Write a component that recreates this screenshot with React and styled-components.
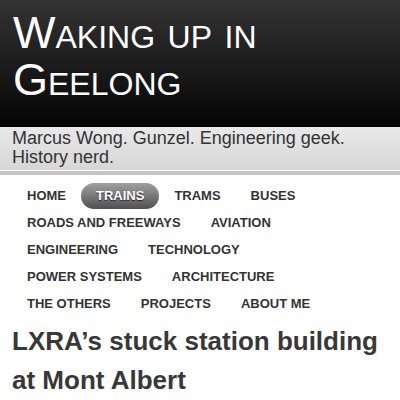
import React from "react";
import styled, { createGlobalStyle } from "styled-components";

const GlobalStyle = createGlobalStyle`
  html, body {
    margin: 0;
    padding: 0;
    background: #fff;
  }
  body {
    font-family: "Liberation Sans", Arial, sans-serif;
    overflow: hidden;
  }
`;

const menu = [
  "Home",
  "Trains",
  "Trams",
  "Buses",
  "Roads and Freeways",
  "Aviation",
  "Engineering",
  "Technology",
  "Power Systems",
  "Architecture",
  "The Others",
  "Projects",
  "About Me",
];

const Masthead = styled.header`
  background: linear-gradient(to bottom, #333 0%, #050505 100%);
  padding: 9px 13px 10px;
  height: 127px;
  box-sizing: border-box;
`;

const SiteTitle = styled.h1`
  margin: 0;
  font-family: "Liberation Sans", Arial, sans-serif;
  font-weight: normal;
  font-variant: small-caps;
  font-size: 45px;
  line-height: 47px;
  color: #fff;
`;

const Tagline = styled.div`
  background: linear-gradient(to bottom, #e9e9e9 0%, #d6d6d6 100%);
  color: #333;
  font-size: 18px;
  line-height: 19px;
  padding: 2px 12px 3px;
  border-bottom: 1px solid #fff;
  box-shadow: 0 4px 0 #c4c4c4;
  margin-bottom: 4px;
`;

const Nav = styled.nav`
  padding: 8px 12px 0;
`;

const MenuList = styled.ul`
  list-style: none;
  margin: 0;
  padding: 0;
  display: flex;
  flex-wrap: wrap;
  row-gap: 1px;
`;

const MenuItem = styled.li`
  display: block;
  padding: 0 15px;
  height: 26px;
  line-height: 26px;
  font-size: 13px;
  font-weight: bold;
  text-transform: uppercase;
  color: ${({ $active }) => ($active ? "#fff" : "#333")};
  border-radius: 13px;
  background: ${({ $active }) =>
    $active ? "linear-gradient(to bottom, #a0a0a0 0%, #505050 100%)" : "none"};
  text-shadow: ${({ $active }) => ($active ? "0 1px 1px #222" : "none")};
  cursor: pointer;
`;

const PostTitle = styled.h2`
  margin: 5px 0 0;
  padding: 0 12px;
  font-size: 26px;
  line-height: 39px;
  font-weight: bold;
  color: #383838;
`;

export default function App() {
  return (
    <>
      <GlobalStyle />
      <Masthead>
        <SiteTitle>Waking up in Geelong</SiteTitle>
      </Masthead>
      <Tagline>Marcus Wong. Gunzel. Engineering geek. History nerd.</Tagline>
      <Nav>
        <MenuList>
          {menu.map((item) => (
            <MenuItem key={item} $active={item === "Trains"}>
              {item}
            </MenuItem>
          ))}
        </MenuList>
      </Nav>
      <PostTitle>LXRA’s stuck station building at Mont Albert</PostTitle>
    </>
  );
}
